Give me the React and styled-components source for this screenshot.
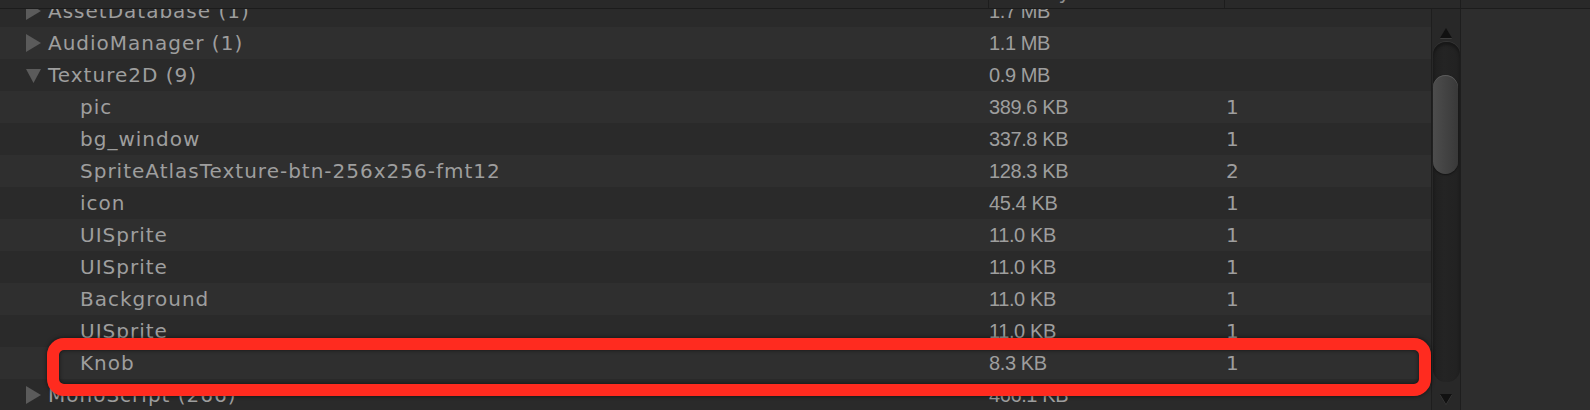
import React from 'react'
import styled, { createGlobalStyle } from 'styled-components';

const GlobalStyle = createGlobalStyle`
    html, body {
        margin: 0;
        padding: 0;
        background: #2d2d2d;
    }
    body {
        font-family: "DejaVu Sans", "Liberation Sans", sans-serif;
        overflow: hidden;
    }
`;

const NAME_W = 988;
const SIZE_W = 236;

const StyledWindow = styled.div`
    position: relative;
    width: 1590px;
    height: 410px;
    display: flex;
    flex-direction: column;
    background: #2d2d2d;
    overflow: hidden;
`;

const HeaderBar = styled.div`
    height: 8px;
    flex: none;
    display: flex;
    background: #292929;
    border-bottom: 1px solid #1c1c1c;
`;

const HeaderCell = styled.div`
    width: ${p => p.$width ? `${p.$width}px` : 'auto'};
    flex: ${p => p.$width ? 'none' : '1'};
    border-right: ${p => p.$last ? 'none' : '1px solid #1d1d1d'};
    box-sizing: border-box;
    overflow: hidden;
    padding-left: ${p => p.$pad || 0}px;

    span {
        display: block;
        margin-top: -18px;
        line-height: 20px;
        font-size: 20px;
        color: #8e8e8e;
        white-space: nowrap;
    }
`;

const Body = styled.div`
    flex: 1;
    display: flex;
    min-height: 0;
`;

const ListView = styled.div`
    width: 1431px;
    flex: none;
    overflow: hidden;
`;

const ListScroll = styled.div`
    margin-top: -14px;
`;

const Row = styled.div`
    height: 32px;
    display: flex;
    align-items: center;
    background: ${p => p.$odd ? '#2f2f2f' : '#2a2a2a'};
    color: #9e9e9e;
    font-size: 20px;
    white-space: nowrap;
`;

const NameCell = styled.div`
    width: ${NAME_W}px;
    flex: none;
    display: flex;
    align-items: center;
    gap: 7px;
    box-sizing: border-box;
    padding-left: ${p => p.$child ? 80 : 26}px;
    letter-spacing: 1px;
`;

const SizeCell = styled.div`
    width: ${SIZE_W}px;
    flex: none;
    font-family: "Liberation Sans", "DejaVu Sans", sans-serif;
    letter-spacing: -0.4px;
    padding-left: 1px;
`;

const CountCell = styled.div`
    flex: 1;
    padding-left: 1px;
`;

const Arrow = styled.svg`
    width: 15px;
    height: 18px;
    flex: none;
    fill: #5b5b5b;
`;

const ScrollBar = styled.div`
    width: 30px;
    flex: none;
    display: flex;
    flex-direction: column;
    align-items: stretch;
    background: #282828;
    border-left: 1px solid #1e1e1e;
    border-right: 1px solid #1e1e1e;
    box-sizing: border-box;
`;

const ScrollButton = styled.div`
    height: ${p => p.$h}px;
    flex: none;
    display: flex;
    justify-content: center;
    align-items: ${p => p.$down ? 'flex-start' : 'flex-end'};
    padding: ${p => p.$down ? '12px 0 0' : '0 0 4px'};
    box-sizing: border-box;

    svg {
        width: 12px;
        height: 10px;
        fill: #111;
        filter: drop-shadow(0 1px 0 #3e3e3e);
    }
`;

const Groove = styled.div`
    flex: 1;
    margin: 0 0 0 1px;
    border-radius: 13px;
    background: linear-gradient(to right, #1f1f1f, #242424 40%, #212121);
    box-shadow: inset 0 3px 3px rgba(0, 0, 0, 0.35), 0 -1px 0 #353535;
    padding-top: 33px;
    box-sizing: border-box;
`;

const Thumb = styled.div`
    height: 99px;
    margin: 0 2px 0 0;
    border-radius: 13px;
    background: linear-gradient(to right, #4d4d4d, #444 45%, #393939);
    box-shadow: inset 0 1px 0 #5a5a5a, 0 1px 2px rgba(0, 0, 0, 0.5);
`;

const SidePanel = styled.div`
    flex: 1;
    background: #2d2d2d;
`;

const Highlight = styled.div`
    position: absolute;
    left: 47px;
    top: 338px;
    width: 1384px;
    height: 58px;
    box-sizing: border-box;
    border: 12px solid #ff2b1f;
    border-radius: 17px;
    box-shadow: 0 0 4px rgba(0, 0, 0, 0.6), inset 0 0 4px rgba(0, 0, 0, 0.6);
    pointer-events: none;
`;

const rows = [
    { name: 'AssetDatabase (1)', size: '1.7 MB', state: 'closed' },
    { name: 'AudioManager (1)', size: '1.1 MB', state: 'closed' },
    { name: 'Texture2D (9)', size: '0.9 MB', state: 'open' },
    { name: 'pic', size: '389.6 KB', count: '1' },
    { name: 'bg_window', size: '337.8 KB', count: '1' },
    { name: 'SpriteAtlasTexture-btn-256x256-fmt12', size: '128.3 KB', count: '2' },
    { name: 'icon', size: '45.4 KB', count: '1' },
    { name: 'UISprite', size: '11.0 KB', count: '1' },
    { name: 'UISprite', size: '11.0 KB', count: '1' },
    { name: 'Background', size: '11.0 KB', count: '1' },
    { name: 'UISprite', size: '11.0 KB', count: '1' },
    { name: 'Knob', size: '8.3 KB', count: '1' },
    { name: 'MonoScript (266)', size: '466.1 KB', state: 'closed' },
];

const Expander = ({ open }) => (
    <Arrow viewBox="0 0 15 18">
        {open
            ? <polygon points="0,3 15,3 7.5,17" />
            : <polygon points="0,0 15,9 0,18" />}
    </Arrow>
);

const App = () => {
    return (
        <>
            <GlobalStyle />
            <StyledWindow>
                <HeaderBar>
                    <HeaderCell $width={NAME_W + 1} />
                    <HeaderCell $width={SIZE_W}><span>Memory</span></HeaderCell>
                    <HeaderCell $width={SIZE_W} />
                    <HeaderCell $last />
                </HeaderBar>
                <Body>
                    <ListView>
                        <ListScroll>
                            {rows.map((r, i) => (
                                <Row key={i} $odd={i % 2 === 1}>
                                    <NameCell $child={!r.state}>
                                        {r.state && <Expander open={r.state === 'open'} />}
                                        <span>{r.name}</span>
                                    </NameCell>
                                    <SizeCell>{r.size}</SizeCell>
                                    <CountCell>{r.count}</CountCell>
                                </Row>
                            ))}
                        </ListScroll>
                    </ListView>
                    <ScrollBar>
                        <ScrollButton $h={33}>
                            <svg viewBox="0 0 12 10"><polygon points="6,0 12,10 0,10" /></svg>
                        </ScrollButton>
                        <Groove>
                            <Thumb />
                        </Groove>
                        <ScrollButton $h={28} $down>
                            <svg viewBox="0 0 12 10"><polygon points="0,0 12,0 6,10" /></svg>
                        </ScrollButton>
                    </ScrollBar>
                    <SidePanel />
                </Body>
                <Highlight />
            </StyledWindow>
        </>
    )
}

export default App;
